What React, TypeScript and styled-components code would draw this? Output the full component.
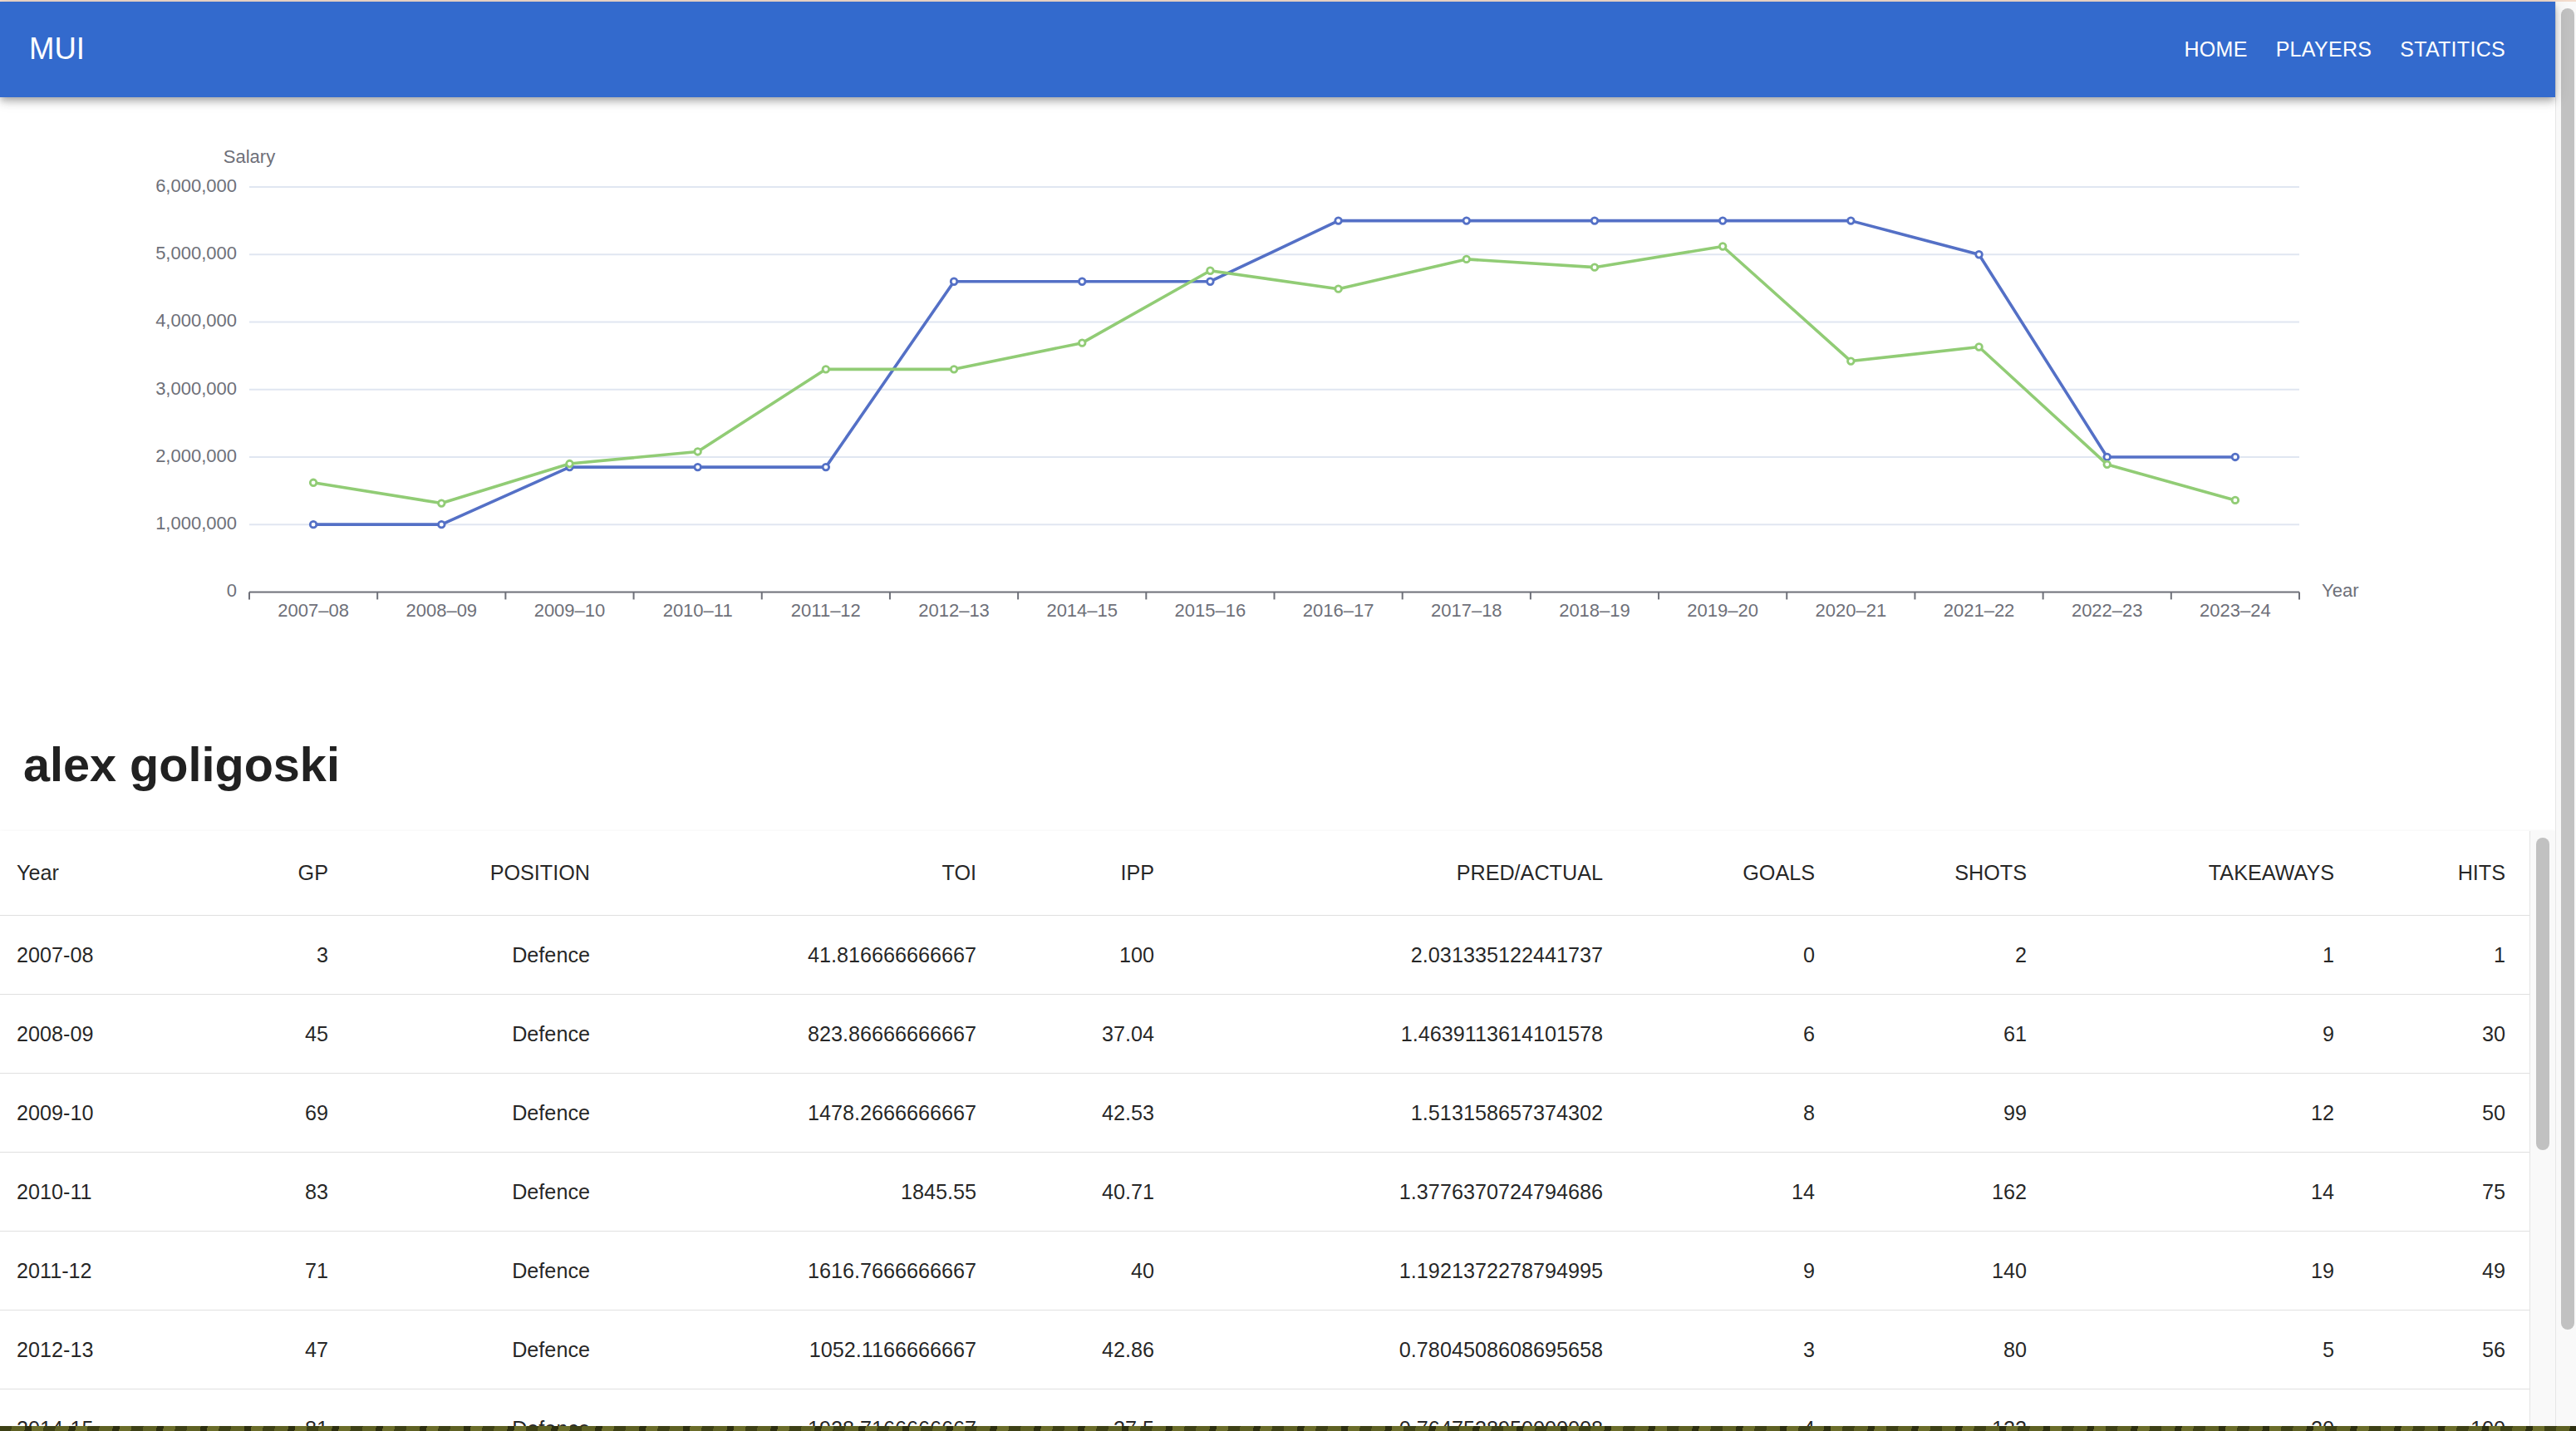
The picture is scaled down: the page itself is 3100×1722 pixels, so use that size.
import React from "react";
import styled, { createGlobalStyle } from "styled-components";

const GlobalStyle = createGlobalStyle`
  html, body { margin: 0; padding: 0; background: #ffffff; }
  body {
    font-family: "Liberation Sans", Arial, Helvetica, sans-serif;
    color: rgba(0, 0, 0, 0.87);
  }
`;

const Frame = styled.div`
  display: flex;
  align-items: flex-start;
  border-top: 2px solid #f3dccd;
`;

const Main = styled.main`
  flex: 1;
  min-width: 0;
  padding-bottom: 72px;
`;

const PageTrack = styled.div`
  flex: none;
  width: 25px;
  height: calc(100vh - 2px);
  box-sizing: border-box;
  background: #f9f9f9;
  border-left: 1px solid #e6e6e6;
  padding: 8px 2px 0 6px;
`;

const PageThumb = styled.div`
  height: 1590px;
  background: #c1c1c1;
  border-radius: 8px;
`;

const Bar = styled.header`
  position: relative;
  z-index: 2;
  height: 115px;
  background: #336acd;
  color: #ffffff;
  display: flex;
  align-items: center;
  justify-content: space-between;
  padding: 0 43px 0 35px;
  box-shadow: 0 3.6px 7.2px -1.8px rgba(0, 0, 0, 0.2), 0 7.2px 9px 0 rgba(0, 0, 0, 0.14),
    0 1.8px 18px 0 rgba(0, 0, 0, 0.12);
`;

const Brand = styled.div`
  font-size: 36.5px;
  line-height: 1;
  font-weight: 400;
`;

const Nav = styled.nav`
  display: flex;
  align-items: center;
`;

const NavButton = styled.button`
  background: none;
  border: 0;
  color: #ffffff;
  font-family: inherit;
  font-size: 25px;
  letter-spacing: 0.3px;
  line-height: 1.75;
  text-transform: uppercase;
  padding: 0 17px;
  cursor: pointer;
`;

const ChartBox = styled.section`
  height: 731px;
`;

const ChartSvg = styled.svg`
  display: block;
  width: 3075px;
  height: 731px;
  text {
    font-family: "Liberation Sans", Arial, Helvetica, sans-serif;
    font-size: 22px;
    fill: #6e7079;
  }
`;

const Title = styled.h1`
  margin: 39px 0 47px 28px;
  font-size: 57.6px;
  line-height: 66px;
  font-weight: 700;
  color: #212121;
`;

const TableWrap = styled.div`
  display: flex;
  height: 792px;
  background: #ffffff;
  box-shadow: 0 3.6px 1.8px -1.8px rgba(0, 0, 0, 0.2), 0 1.8px 1.8px 0 rgba(0, 0, 0, 0.14),
    0 1.8px 5.4px 0 rgba(0, 0, 0, 0.12);
`;

const TableScroll = styled.div`
  flex: 1;
  min-width: 0;
  height: 100%;
  overflow: auto;
`;

const TableTrack = styled.div`
  flex: none;
  width: 31px;
  box-sizing: border-box;
  background: #f9f9f9;
  border-left: 1px solid #e4e4e4;
  padding: 8px 7px 0 7px;
`;

const TableThumb = styled.div`
  height: 376px;
  background: #c1c1c1;
  border-radius: 8px;
`;

const Table = styled.table`
  width: 100%;
  table-layout: fixed;
  border-collapse: separate;
  border-spacing: 0;
  font-size: 25.2px;
`;

const HeadCell = styled.th<{ $left?: boolean }>`
  position: sticky;
  top: 0;
  z-index: 1;
  background: #ffffff;
  font-weight: 400;
  line-height: 43px;
  text-align: ${(p) => (p.$left ? "left" : "right")};
  padding: 29px ${(p) => (p.$left ? "0" : "29px")} 29px ${(p) => (p.$left ? "20px" : "0")};
  border-bottom: 1px solid #e0e0e0;
  color: rgba(0, 0, 0, 0.87);
  white-space: nowrap;
`;

const Cell = styled.td<{ $left?: boolean }>`
  line-height: 36px;
  text-align: ${(p) => (p.$left ? "left" : "right")};
  padding: 29px ${(p) => (p.$left ? "0" : "29px")} 29px ${(p) => (p.$left ? "20px" : "0")};
  border-bottom: 1px solid #e0e0e0;
  color: rgba(0, 0, 0, 0.87);
  white-space: nowrap;
`;

const Desk = styled.div`
  position: fixed;
  left: 0;
  bottom: 0;
  width: 100vw;
  height: 6px;
  z-index: 10;
  background: repeating-linear-gradient(100deg, #3d4015 0 14px, #5e6123 14px 30px, #2c2e0f 30px 38px, #6b6d2a 38px 52px);
`;

const seasons = [
  "2007-08", "2008-09", "2009-10", "2010-11", "2011-12", "2012-13", "2014-15", "2015-16",
  "2016-17", "2017-18", "2018-19", "2019-20", "2020-21", "2021-22", "2022-23", "2023-24",
];
const blueSeries = [1.0, 1.0, 1.85, 1.85, 1.85, 4.6, 4.6, 4.6, 5.5, 5.5, 5.5, 5.5, 5.5, 5.0, 2.0, 2.0];
const greenSeries = [1.62, 1.315, 1.9, 2.08, 3.3, 3.3, 3.69, 4.76, 4.49, 4.93, 4.81, 5.12, 3.42, 3.63, 1.89, 1.36];

const LEFT = 300;
const RIGHT = 2767;
const TOP = 108;
const BOTTOM = 595.4;
const STEP = (RIGHT - LEFT) / seasons.length;
const yOf = (v: number) => BOTTOM - (v * (BOTTOM - TOP)) / 6;
const xOf = (i: number) => LEFT + STEP * (i + 0.5);

const yTicks = ["0", "1,000,000", "2,000,000", "3,000,000", "4,000,000", "5,000,000", "6,000,000"];

function Series({ data, color }: { data: number[]; color: string }) {
  const pts = data.map((v, i) => `${xOf(i)},${yOf(v)}`).join(" ");
  return (
    <g>
      <polyline points={pts} fill="none" stroke={color} strokeWidth={3.6} strokeLinejoin="round" />
      {data.map((v, i) => (
        <circle key={i} cx={xOf(i)} cy={yOf(v)} r={3.8} fill="#ffffff" stroke={color} strokeWidth={2.8} />
      ))}
    </g>
  );
}

function SalaryChart() {
  return (
    <ChartBox>
      <ChartSvg viewBox="0 0 3075 731">
        {yTicks.map((label, k) =>
          k === 0 ? null : (
            <line key={`g${k}`} x1={LEFT} x2={RIGHT} y1={yOf(k)} y2={yOf(k)} stroke="#e0e6f1" strokeWidth={2} />
          )
        )}
        {yTicks.map((label, k) => (
          <text key={`y${k}`} x={285} y={yOf(k)} textAnchor="end" dominantBaseline="middle">
            {label}
          </text>
        ))}
        <text x={300} y={73} textAnchor="middle" dominantBaseline="middle">
          Salary
        </text>
        <line x1={LEFT} x2={RIGHT} y1={BOTTOM} y2={BOTTOM} stroke="#6e7079" strokeWidth={2} />
        {Array.from({ length: seasons.length + 1 }).map((_, i) => (
          <line
            key={`t${i}`}
            x1={LEFT + i * STEP}
            x2={LEFT + i * STEP}
            y1={BOTTOM}
            y2={BOTTOM + 9}
            stroke="#6e7079"
            strokeWidth={2}
          />
        ))}
        {seasons.map((s, i) => (
          <text key={`x${i}`} x={xOf(i)} y={619} textAnchor="middle" dominantBaseline="middle">
            {s.replace("-", "–")}
          </text>
        ))}
        <text x={2794} y={BOTTOM} dominantBaseline="middle">
          Year
        </text>
        <Series data={blueSeries} color="#5470c6" />
        <Series data={greenSeries} color="#91cc75" />
      </ChartSvg>
    </ChartBox>
  );
}

const headers = ["Year", "GP", "POSITION", "TOI", "IPP", "PRED/ACTUAL", "GOALS", "SHOTS", "TAKEAWAYS", "HITS"];
const widths = [200, 224, 315, 465, 214, 540, 255, 255, 370, 206];

const rows: string[][] = [
  ["2007-08", "3", "Defence", "41.816666666667", "100", "2.031335122441737", "0", "2", "1", "1"],
  ["2008-09", "45", "Defence", "823.86666666667", "37.04", "1.4639113614101578", "6", "61", "9", "30"],
  ["2009-10", "69", "Defence", "1478.2666666667", "42.53", "1.513158657374302", "8", "99", "12", "50"],
  ["2010-11", "83", "Defence", "1845.55", "40.71", "1.3776370724794686", "14", "162", "14", "75"],
  ["2011-12", "71", "Defence", "1616.7666666667", "40", "1.1921372278794995", "9", "140", "19", "49"],
  ["2012-13", "47", "Defence", "1052.1166666667", "42.86", "0.7804508608695658", "3", "80", "5", "56"],
  ["2014-15", "81", "Defence", "1928.7166666667", "37.5", "0.7647538950000008", "4", "122", "20", "100"],
  ["2015-16", "82", "Defence", "1915.35", "35.64", "1.0347826086956522", "5", "134", "18", "71"],
  ["2016-17", "72", "Defence", "1616.4666666667", "32.79", "0.8163636363636364", "3", "103", "17", "58"],
  ["2017-18", "78", "Defence", "1571.2333333333", "31.43", "0.8963636363636364", "3", "104", "21", "69"],
  ["2018-19", "75", "Defence", "1348.9", "27.27", "0.8745454545454545", "2", "82", "16", "63"],
  ["2019-20", "58", "Defence", "1080.6666666667", "33.33", "0.9309090909090909", "2", "68", "10", "43"],
  ["2020-21", "52", "Defence", "972.48333333333", "33.33", "0.6218181818181818", "3", "55", "12", "39"],
  ["2021-22", "67", "Defence", "1171.6", "36.11", "0.7260000000000001", "2", "71", "15", "55"],
  ["2022-23", "51", "Defence", "793.91666666667", "28.57", "0.945", "1", "38", "7", "31"],
  ["2023-24", "28", "Defence", "412.4", "25", "0.68", "0", "19", "4", "22"],
];

function StatsTable() {
  return (
    <TableWrap>
      <TableScroll>
        <Table>
          <colgroup>
            {widths.map((w, i) => (
              <col key={i} style={{ width: w }} />
            ))}
          </colgroup>
          <thead>
            <tr>
              {headers.map((h, i) => (
                <HeadCell key={h} $left={i === 0}>
                  {h}
                </HeadCell>
              ))}
            </tr>
          </thead>
          <tbody>
            {rows.map((r) => (
              <tr key={r[0]}>
                {r.map((c, i) => (
                  <Cell key={i} $left={i === 0}>
                    {c}
                  </Cell>
                ))}
              </tr>
            ))}
          </tbody>
        </Table>
      </TableScroll>
      <TableTrack>
        <TableThumb />
      </TableTrack>
    </TableWrap>
  );
}

export default function App() {
  return (
    <Frame>
      <GlobalStyle />
      <Main>
        <Bar>
          <Brand>MUI</Brand>
          <Nav>
            <NavButton>Home</NavButton>
            <NavButton>Players</NavButton>
            <NavButton>Statitics</NavButton>
          </Nav>
        </Bar>
        <SalaryChart />
        <Title>alex goligoski</Title>
        <StatsTable />
      </Main>
      <PageTrack>
        <PageThumb />
      </PageTrack>
      <Desk />
    </Frame>
  );
}
